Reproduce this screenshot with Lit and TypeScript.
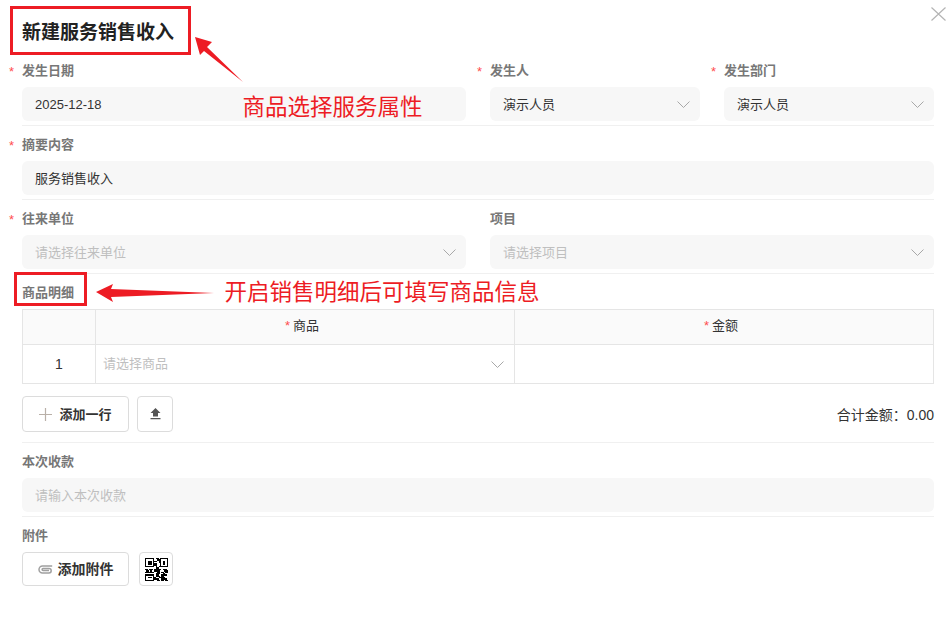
import { LitElement, html, css, svg } from "lit";
import { customElement } from "lit/decorators.js";

const chevron = html`<svg class="chev" width="13" height="7" viewBox="0 0 13 7"><path d="M0.5 0.5l6 6 6-6" fill="none" stroke="#a8a8a8" stroke-width="1"/></svg>`;

const qrCells = [
  "11111110110111111",
  "10000010011100001",
  "10111011101101101",
  "10111010001101101",
  "10111011100101101",
  "10000011100100001",
  "11111110101111111",
  "00000000110000000",
  "11011101111101110",
  "01101001111000111",
  "11111110011011011",
  "00000000111001100",
  "11111110110011110",
  "10000010111011000",
  "10111011001111100",
  "10000011110011110",
  "11111110011011011",
];

const qr = html`<svg width="23" height="23" viewBox="0 0 17 17" shape-rendering="crispEdges">${qrCells.map((r, y) =>
  [...r].map((c, x) => (c === "1" ? svg`<rect x=${x} y=${y} width="1" height="1" fill="#000"/>` : ""))
)}</svg>`;

@customElement("app-root")
export class AppRoot extends LitElement {
  static styles = css`
    :host {
      display: block;
      position: relative;
      width: 947px;
      height: 629px;
      box-sizing: border-box;
      padding: 0 13px 0 22px;
      background: #fff;
      overflow: hidden;
      font-family: "Liberation Sans", "Noto Sans CJK SC", sans-serif;
      font-size: 13px;
      color: #333;
    }
    .title {
      height: 52px;
      box-sizing: border-box;
      padding-top: 20px;
      font-size: 19px;
      line-height: 26px;
      font-weight: 700;
      color: #222;
    }
    .row { display: grid; grid-template-columns: repeat(4, 1fr); column-gap: 24px; }
    .sec { padding-top: 9px; }
    .span2 { grid-column: span 2; }
    .label {
      position: relative;
      height: 18px;
      line-height: 20px;
      margin-bottom: 8px;
      font-weight: 700;
      color: #777;
    }
    .req::before {
      content: "*";
      position: absolute;
      left: -13px;
      top: 1px;
      color: #ff4d4f;
      font-weight: 400;
    }
    .input {
      display: flex;
      align-items: center;
      justify-content: space-between;
      height: 34px;
      box-sizing: border-box;
      padding: 0 10px 0 13px;
      background: #f7f7f7;
      border-radius: 6px;
    }
    .input span { padding-bottom: 2px; }
    .ph { color: #bfbfbf; }
    .divider { height: 1px; background: #f0f0f0; margin-top: 4px; }
    table {
      width: 100%;
      border-collapse: collapse;
      table-layout: fixed;
      line-height: 16px;
    }
    th, td { border: 1px solid #e5e5e5; padding: 0; font-weight: 400; }
    th { height: 32px; background: #fafafa; text-align: center; padding: 0 6px 2px 0; }
    td { height: 38px; }
    .c1 { width: 73px; }
    .c2 { width: 419px; }
    .th-star { color: #ff4d4f; margin-right: 3px; }
    td.num { height: 37px; text-align: center; font-size: 14px; padding-bottom: 1px; }
    .sel { display: flex; align-items: center; justify-content: space-between; padding: 0 10px 0 7px; }
    .sel span { padding-bottom: 1px; }
    .tools {
      display: flex;
      align-items: center;
      gap: 8px;
      margin-top: 12px;
    }
    .btn {
      display: flex;
      align-items: center;
      justify-content: center;
      box-sizing: border-box;
      height: 36px;
      background: #fff;
      border: 1px solid #dcdcdc;
      border-radius: 4px;
      font-weight: 700;
      color: #333;
    }
    .btn span { padding-bottom: 2px; }
    .wide { width: 107px; gap: 7px; }
    .square { width: 36px; }
    .total { margin-left: auto; font-size: 14px; }
    .d2 { margin-top: 10px; }
    .attach { display: flex; gap: 10px; }
    .attach .btn { height: 34px; }
    .attach .wide { gap: 5px; font-size: 14px; }
    .attach .square { width: 34px; }
    .mark {
      position: absolute;
      box-sizing: border-box;
      border: 3px solid #ed1c24;
    }
    .m1 { left: 10px; top: 6px; width: 181px; height: 49px; }
    .m2 { left: 14px; top: 272px; width: 73px; height: 34px; }
    .note {
      position: absolute;
      color: #ed1c24;
      font-size: 22.5px;
      line-height: 30px;
      white-space: nowrap;
      font-family: "Noto Sans CJK SC", sans-serif;
    }
    .n1 { left: 242.5px; top: 90px; }
    .n2 { left: 224.5px; top: 275px; }
    .arrows { position: absolute; left: 0; top: 0; pointer-events: none; }
    .close { position: absolute; left: 931px; top: 7px; }
  `;

  render() {
    return html`
      <div class="title">新建服务销售收入</div>
      <div class="row sec">
        <div class="span2"><div class="label req">发生日期</div><div class="input">2025-12-18</div></div>
        <div><div class="label req">发生人</div><div class="input"><span>演示人员</span>${chevron}</div></div>
        <div><div class="label req">发生部门</div><div class="input"><span>演示人员</span>${chevron}</div></div>
      </div>
      <div class="divider"></div>
      <div class="sec">
        <div class="label req">摘要内容</div>
        <div class="input"><span>服务销售收入</span></div>
      </div>
      <div class="divider"></div>
      <div class="row sec">
        <div class="span2"><div class="label req">往来单位</div><div class="input"><span class="ph">请选择往来单位</span>${chevron}</div></div>
        <div class="span2"><div class="label">项目</div><div class="input"><span class="ph">请选择项目</span>${chevron}</div></div>
      </div>
      <div class="divider"></div>
      <div class="sec">
        <div class="label">商品明细</div>
        <table>
          <colgroup><col class="c1" /><col class="c2" /><col /></colgroup>
          <tr><th></th><th><span class="th-star">*</span>商品</th><th><span class="th-star">*</span>金额</th></tr>
          <tr>
            <td class="num">1</td>
            <td><div class="sel"><span class="ph">请选择商品</span>${chevron}</div></td>
            <td></td>
          </tr>
        </table>
      </div>
      <div class="tools">
        <div class="btn wide">
          <svg width="13" height="13" viewBox="0 0 13 13"><path d="M6.5 0v13M0 6.5h13" stroke="#b9b0a8" stroke-width="1.2" fill="none"/></svg>
          <span>添加一行</span>
        </div>
        <div class="btn square">
          <svg width="11" height="12" viewBox="0 0 11 12"><path d="M5.5 0L10.5 5H8v3.5H3V5H0.5z M0.5 10h10v1.3H0.5z" fill="#555"/></svg>
        </div>
        <div class="total">合计金额：0.00</div>
      </div>
      <div class="divider d2"></div>
      <div class="sec">
        <div class="label">本次收款</div>
        <div class="input"><span class="ph">请输入本次收款</span></div>
      </div>
      <div class="divider"></div>
      <div class="sec">
        <div class="label">附件</div>
        <div class="attach">
          <div class="btn wide">
            <svg width="15" height="9" viewBox="0 0 15 9"><path d="M14.2 1H4.5a3.5 3.5 0 0 0 0 7h6.5a2.2 2.2 0 0 0 0-4.4H5a.9.9 0 0 0 0 1.8h6" fill="none" stroke="#a0a0a0" stroke-width="1.5"/></svg>
            <span>添加附件</span>
          </div>
          <div class="btn square">${qr}</div>
        </div>
      </div>

      <svg class="close" width="15" height="14" viewBox="0 0 15 14"><path d="M0.5 0.5l14 13M14.5 0.5l-14 13" stroke="#b4b4b4" stroke-width="1.2" fill="none"/></svg>
      <div class="mark m1"></div>
      <div class="mark m2"></div>
      <svg class="arrows" width="947" height="629" viewBox="0 0 947 629">
        <polygon points="195,37 212,42 207,47 243,82 204,51 200,55" fill="#ed1c24"/>
        <polygon points="96,292 113,284 111,289 214,293 111,297 113,302" fill="#ed1c24"/>
      </svg>
      <div class="note n1">商品选择服务属性</div>
      <div class="note n2">开启销售明细后可填写商品信息</div>
    `;
  }
}
